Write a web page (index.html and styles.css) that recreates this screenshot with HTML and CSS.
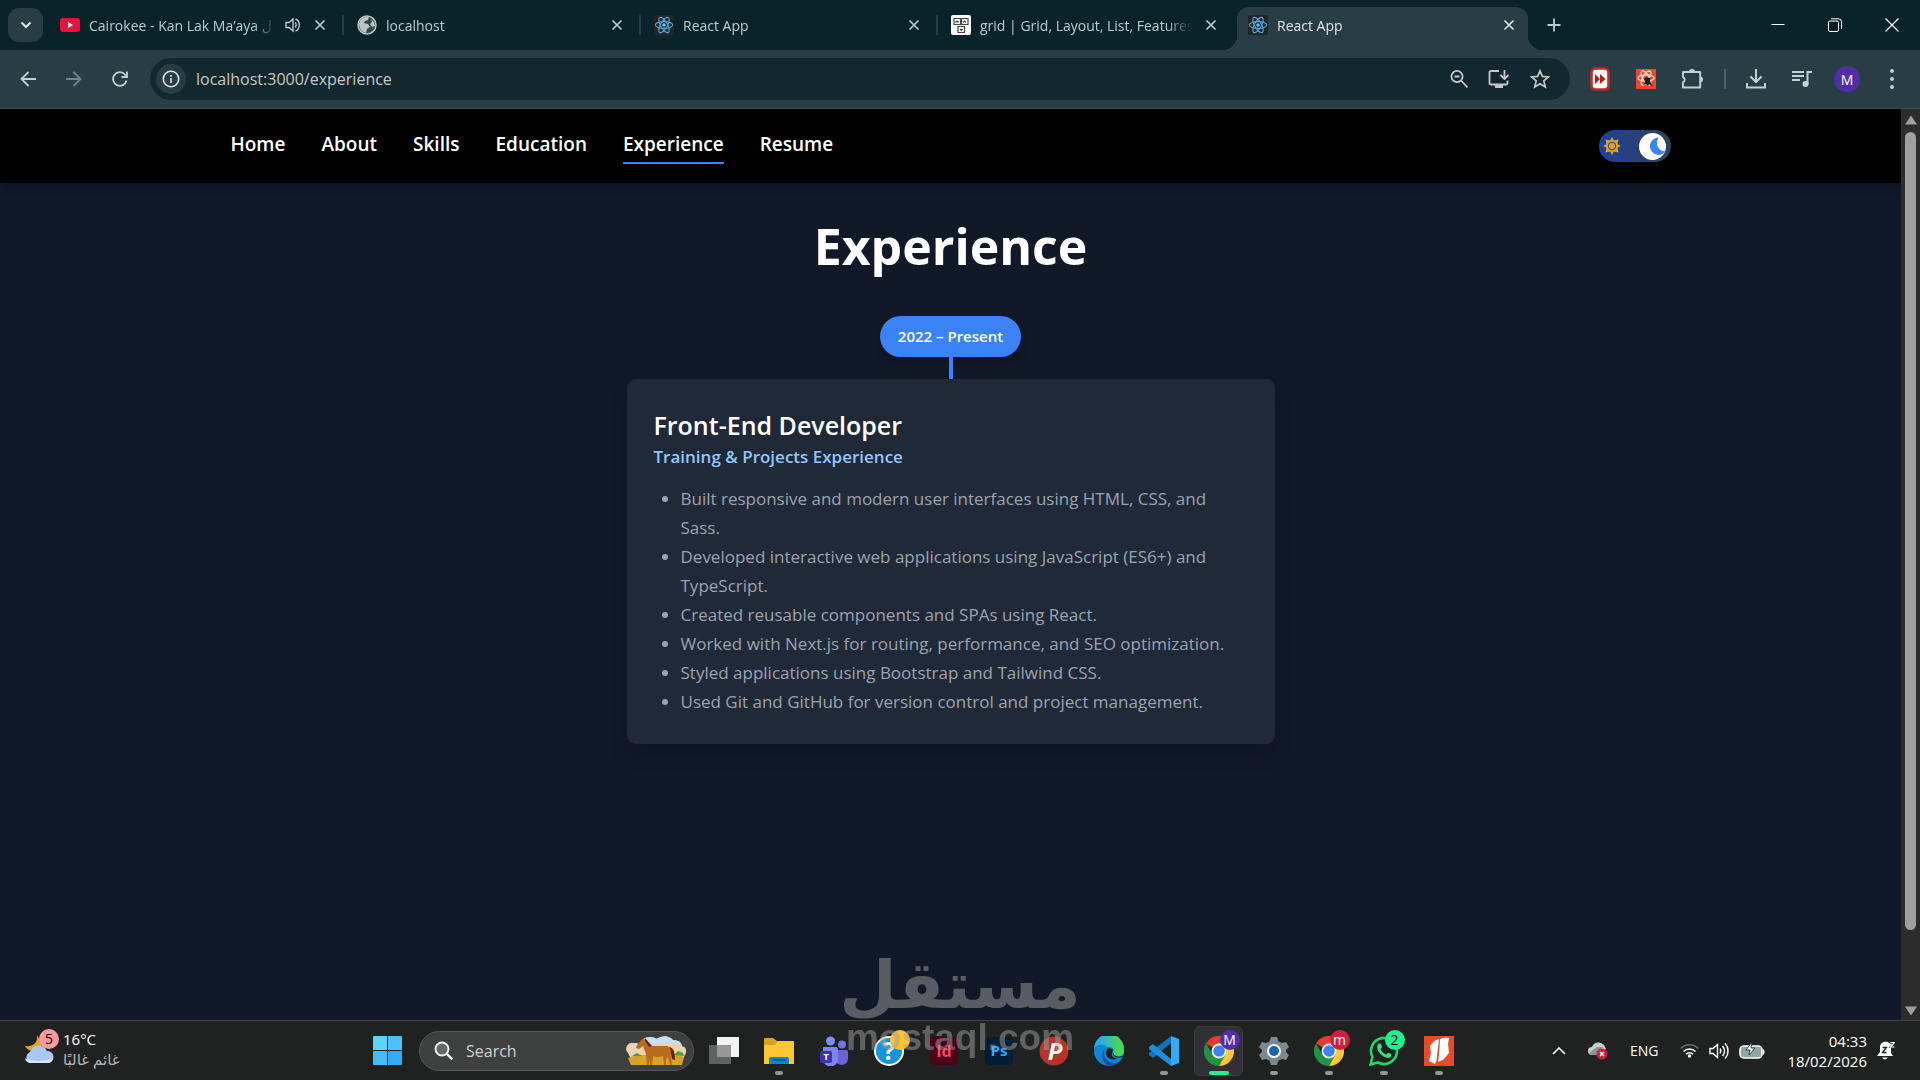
FILE: index.html
```
<!DOCTYPE html>
<html lang="en">
<head>
  <meta charset="UTF-8">
  <meta name="viewport" content="width=device-width, initial-scale=1.0">
  <title>React App</title>
  <link rel="stylesheet" href="styles.css">
</head>
<body>
  <!-- shared icons -->
  <svg class="sprite" aria-hidden="true">
    <symbol id="react" viewBox="0 0 20 20">
      <rect width="20" height="20" rx="2" fill="#242424"/>
      <g fill="none" stroke="#4fa8dc" stroke-width="1.1">
        <ellipse cx="10" cy="10" rx="8.6" ry="3.4"/>
        <ellipse cx="10" cy="10" rx="8.6" ry="3.4" transform="rotate(60 10 10)"/>
        <ellipse cx="10" cy="10" rx="8.6" ry="3.4" transform="rotate(120 10 10)"/>
      </g>
      <circle cx="10" cy="10" r="1.7" fill="#61c8f5"/>
    </symbol>
    <symbol id="close" viewBox="0 0 12 12">
      <path d="M1.5 1.5l9 9M10.5 1.5l-9 9" fill="none" stroke="currentColor" stroke-width="1.7"/>
    </symbol>
    <symbol id="chrome" viewBox="0 0 30 30">
      <path d="M15 15L2 7.5A15 15 0 0 1 28 7.5z" fill="#e33b2e"/>
      <path d="M2 7.5A15 15 0 0 0 15 30L21.5 18.5L9 19z" fill="#229342"/>
      <path d="M21.5 18.5L15 30A15 15 0 0 0 28 7.5H15z" fill="#fcc934"/>
      <circle cx="15" cy="15" r="7.4" fill="#fff"/>
      <circle cx="15" cy="15" r="5.8" fill="#3f82ee"/>
    </symbol>
  </svg>

  <div class="browser">
    <div class="tabs">
      <button class="tab-search" aria-label="Search tabs">
        <svg width="12" height="8" viewBox="0 0 12 8"><path d="M1.5 1.5L6 6l4.5-4.5" fill="none" stroke="currentColor" stroke-width="2"/></svg>
      </button>
      <div class="tab">
        <svg class="favicon" viewBox="0 0 20 20"><rect y="3" width="20" height="14" rx="3" fill="#e8113c"/><path d="M8 7l5 3-5 3z" fill="#fff"/></svg>
        <span class="tab-title">Cairokee - Kan Lak Ma’aya ل</span>
        <svg width="16" height="16" viewBox="0 0 16 16" fill="none" stroke="currentColor" stroke-width="1.4"><path d="M1 5.5h3L8 2v12L4 10.5H1zM10 5.5c1.500 1 1.500 4 0 5M10.500 2c5 1.500 5 10.500 0 12"/></svg>
        <button class="tab-close" aria-label="Close tab"><svg><use href="#close"/></svg></button>
      </div>
      <div class="tab">
        <svg class="favicon" viewBox="0 0 20 20"><circle cx="10" cy="10" r="9" fill="#33444a" stroke="#bdc1c6" stroke-width="1.5"/><path d="M2 8c2-5 6-7 10-6l-1 3-3 1-1 2 4 1 2 3-3 2-1 4c-4-1-7-4-7-10zM14 4l3 3 1 4-3 1-2-3 2-2z" fill="#bdc1c6"/></svg>
        <span class="tab-title">localhost</span>
        <button class="tab-close" aria-label="Close tab"><svg><use href="#close"/></svg></button>
      </div>
      <div class="tab">
        <svg class="favicon"><use href="#react"/></svg>
        <span class="tab-title">React App</span>
        <button class="tab-close" aria-label="Close tab"><svg><use href="#close"/></svg></button>
      </div>
      <div class="tab no-line">
        <svg class="favicon" viewBox="0 0 20 20"><rect width="20" height="20" rx="2" fill="#fff"/><g fill="none" stroke="#444" stroke-width="1.2"><path d="M3 3.500h6.500v6H3zM10.500 3.500H17v6h-6.500zM7 11.500h6.500v6H7zM4.500 7.500l1.500-1.500 1.500 1.500M12 7.500l1.500-1.500 1.500 1.500M9 14l1.300 1.300L11.600 14"/></g></svg>
        <span class="tab-title">grid | Grid, Layout, List, Features</span>
        <button class="tab-close" aria-label="Close tab"><svg><use href="#close"/></svg></button>
      </div>
      <div class="tab active">
        <svg class="favicon"><use href="#react"/></svg>
        <span class="tab-title">React App</span>
        <button class="tab-close" aria-label="Close tab"><svg><use href="#close"/></svg></button>
      </div>
      <button class="new-tab" aria-label="New tab">
        <svg width="14" height="14" viewBox="0 0 14 14"><path d="M7 0.500v13M0.500 7h13" stroke="currentColor" stroke-width="1.8"/></svg>
      </button>
      <div class="window-controls">
        <button aria-label="Minimize"><svg width="14" height="14" viewBox="0 0 14 14"><path d="M0.500 6.500h13" stroke="#fff"/></svg></button>
        <button aria-label="Restore"><svg width="14" height="14" viewBox="0 0 14 14" fill="none" stroke="#fff"><rect x="0.500" y="3" width="10" height="10.500" rx="1.500"/><path d="M3 0.800h7.500a3 3 0 0 1 3 3V11"/></svg></button>
        <button aria-label="Close"><svg width="14" height="14" viewBox="0 0 14 14"><path d="M0.500 0.500l13 13M13.500 0.500l-13 13" stroke="#fff" stroke-width="1.2"/></svg></button>
      </div>
    </div>

    <div class="toolbar">
      <button class="tool" aria-label="Back"><svg width="16" height="16" viewBox="0 0 16 16"><path d="M8.500 1L1.500 8l7 7M1.500 8H16" fill="none" stroke="currentColor" stroke-width="1.8"/></svg></button>
      <button class="tool" aria-label="Forward" disabled><svg width="16" height="16" viewBox="0 0 16 16"><path d="M7.500 1l7 7-7 7M14.500 8H0" fill="none" stroke="currentColor" stroke-width="1.8"/></svg></button>
      <button class="tool" aria-label="Reload"><svg width="16" height="16" viewBox="0 0 16 16"><path d="M14.500 9.500A6.800 6.800 0 1 1 13 3.500l1.500 1.500M15 0.500V6H9.500" fill="none" stroke="currentColor" stroke-width="1.8"/></svg></button>
      <div class="address">
        <button class="site-info" aria-label="Site information"><svg width="18" height="18" viewBox="0 0 18 18"><circle cx="9" cy="9" r="7.7" fill="none" stroke="#e3e3e3" stroke-width="1.6"/><path d="M9 8v5M9 5v1.700" stroke="#e3e3e3" stroke-width="1.6"/></svg></button>
        <input class="url" type="text" aria-label="Address" value="localhost:3000/experience">
        <button class="tool-small" aria-label="Zoom"><svg width="18" height="20" viewBox="0 0 18 20"><g fill="none" stroke="currentColor" stroke-width="1.8"><circle cx="7" cy="7.5" r="5.6"/><path d="M11 11.500l6.500 7M4.500 7.500h5"/></g></svg></button>
        <button class="tool-small" aria-label="Install app"><svg width="22" height="20" viewBox="0 0 22 20"><g fill="none" stroke="currentColor" stroke-width="1.8"><path d="M11 2H3a1.500 1.500 0 0 0-1.500 1.500V14A1.500 1.500 0 0 0 3 15.500h15a1.500 1.500 0 0 0 1.500-1.500v-2.500M16.500 1v8.500M12.500 6l4 4 4-4"/></g><path d="M7 15h8v4H7z" fill="currentColor"/></svg></button>
        <button class="tool-small" aria-label="Bookmark"><svg width="20" height="20" viewBox="0 0 20 20"><path d="M10 1.800l2.400 5.600 6 .500-4.600 4 1.400 6L10 14.700l-5.200 3.200 1.400-6-4.600-4 6-.500z" fill="none" stroke="currentColor" stroke-width="1.7"/></svg></button>
      </div>
      <div class="extensions">
        <button class="tool" aria-label="Skip"><svg width="20" height="24" viewBox="0 0 20 24"><rect x="1.500" y="1.500" width="17" height="21" rx="4" fill="#fff" stroke="#c62828" stroke-width="2.6"/><path d="M5 7l5 5-5 5zM10 7l5.500 5-5.500 5z" fill="#b71c1c"/></svg></button>
        <button class="tool" aria-label="React tools"><svg width="20" height="20" viewBox="0 0 20 20"><rect width="20" height="20" fill="#f4442e"/><g fill="none" stroke="#ffe3dc" stroke-width="1.3"><ellipse cx="10" cy="9" rx="8" ry="3.2"/><ellipse cx="10" cy="9" rx="8" ry="3.2" transform="rotate(60 10 9)"/><ellipse cx="10" cy="9" rx="8" ry="3.2" transform="rotate(120 10 9)"/></g><path d="M10 8l3 1 2-1-1 4 3 6-4-3-1 2-2-2-3 1 2-3-1-3z" fill="#1c1c1c"/></svg></button>
        <button class="tool" aria-label="Extensions"><svg width="22" height="22" viewBox="0 0 22 22"><path d="M2 4h17.200v15.500H2v-5.300a2.700 2.700 0 0 0 0-5z" fill="none" stroke="currentColor" stroke-width="1.9" stroke-linejoin="round"/><path d="M8 4a3 3 0 0 1 6 0zM19 8.500a3 3 0 0 1 0 6z" fill="currentColor"/></svg></button>
      </div>
      <span class="divider"></span>
      <div class="extensions">
        <button class="tool" aria-label="Downloads"><svg width="20" height="22" viewBox="0 0 20 22"><path d="M10 1v12M4.500 8.500L10 14l5.500-5.500M1 15v4.500h18V15" fill="none" stroke="currentColor" stroke-width="2"/></svg></button>
        <button class="tool" aria-label="Media"><svg width="20" height="18" viewBox="0 0 20 18"><path d="M0 2h12M0 6h12M0 10h8M15.500 14V2H20" fill="none" stroke="currentColor" stroke-width="2"/><circle cx="13.500" cy="14" r="3" fill="currentColor"/></svg></button>
        <button class="profile" aria-label="Profile">M</button>
        <button class="tool" aria-label="Menu"><svg width="4" height="20" viewBox="0 0 4 20" fill="currentColor"><circle cx="2" cy="2" r="2"/><circle cx="2" cy="10" r="2"/><circle cx="2" cy="18" r="2"/></svg></button>
      </div>
    </div>

    <div class="viewport">
      <div class="page">
        <header class="navbar">
          <div class="navbar-inner">
            <nav>
              <a href="#home">Home</a>
              <a href="#about">About</a>
              <a href="#skills">Skills</a>
              <a href="#education">Education</a>
              <a href="#experience" class="current">Experience</a>
              <a href="#resume">Resume</a>
            </nav>
            <label class="theme-toggle">
              <input type="checkbox" aria-label="Dark mode" checked>
              <svg width="18" height="18" viewBox="0 0 18 18"><path d="M9 0l1.800 3.500L15.400 2.600l-.900 4.600L18 9l-3.500 1.800.900 4.600-4.600-.900L9 18l-1.800-3.500-4.600.900.900-4.600L0 9l3.500-1.800-.900-4.600 4.600.900z" fill="#e0a526"/><circle cx="9" cy="9" r="3.800" fill="none" stroke="#2a3f7a"/></svg>
              <span class="knob"><svg width="16" height="18" viewBox="0 0 16 18"><path d="M9 0.500A8.700 8.700 0 1 0 15.500 14.500A8.500 8.500 0 0 1 9 0.500z" fill="#3b82f6"/></svg></span>
            </label>
          </div>
        </header>

        <main>
          <h1>Experience</h1>
          <div class="period">2022 – Present</div>
          <div class="line"></div>
          <article class="card">
            <h2>Front-End Developer</h2>
            <h3>Training &amp; Projects Experience</h3>
            <ul>
              <li>Built responsive and modern user interfaces using HTML, CSS, and Sass.</li>
              <li>Developed interactive web applications using JavaScript (ES6+) and TypeScript.</li>
              <li>Created reusable components and SPAs using React.</li>
              <li>Worked with Next.js for routing, performance, and SEO optimization.</li>
              <li>Styled applications using Bootstrap and Tailwind CSS.</li>
              <li>Used Git and GitHub for version control and project management.</li>
            </ul>
          </article>
        </main>
      </div>
      <div class="scrollbar">
        <svg width="12" height="10" viewBox="0 0 12 10"><path d="M6 0.500L12 9.500H0z" fill="#9f9f9f"/></svg>
        <div class="track"><div class="thumb"></div></div>
        <svg width="12" height="10" viewBox="0 0 12 10"><path d="M6 9.500L12 0.500H0z" fill="#9f9f9f"/></svg>
      </div>
    </div>
  </div>

  <footer class="taskbar">
    <button class="weather">
      <span class="icon">
        <svg width="32" height="32" viewBox="0 0 32 32"><path d="M14 2c1 7-3 12-12 11 3 7 14 6 17-2z" fill="#e8a317"/><path d="M7 30a6 6 0 0 1 0-11 9 9 0 0 1 17-1 6 6 0 0 1 1 12z" fill="#a9c8f5"/><path d="M2 25a6 6 0 0 0 5 5h18a6 6 0 0 0 5-5c-5 4-23 4-28 0z" fill="#d8e6fb"/></svg>
        <span class="badge pink">5</span>
      </span>
      <span class="weather-text">
        <span>16°C</span>
        <span class="muted" lang="ar" dir="rtl">غائم غالبًا</span>
      </span>
    </button>

    <div class="apps">
      <button class="app" aria-label="Start"><svg width="29" height="29" viewBox="0 0 29 29"><path d="M0 1a1 1 0 0 1 1-1h13v14H0z" fill="#5fd3ff"/><path d="M15 0h13a1 1 0 0 1 1 1v13H15z" fill="#4cc2f8"/><path d="M0 15h14v14H1a1 1 0 0 1-1-1z" fill="#43bdf8"/><path d="M15 15h14v13a1 1 0 0 1-1 1H15z" fill="#2fadf2"/></svg></button>
      <label class="search">
        <svg width="20" height="20" viewBox="0 0 20 20"><circle cx="8" cy="8" r="6.5" fill="#66686a" stroke="#f0f0f0" stroke-width="2"/><path d="M12.800 12.800l5.500 5.500" stroke="#f0f0f0" stroke-width="2.4"/></svg>
        <input type="search" placeholder="Search" aria-label="Search">
        <svg width="62" height="32" viewBox="0 0 62 32">
          <path d="M3 18a6 6 0 0 1 6-10q4 0 6 2 2-8 10-8 5 0 6 2 10-6 17 1 8 0 9 6 5 1 4 7l-3 6H6z" fill="#e9d3b0"/>
          <path d="M9 8q4 0 6 2 2-8 10-8 5 0 6 2 10-6 17 1 8 0 9 6-10-5-20-3T9 11z" fill="#c6dff2"/>
          <path d="M3 23l8-3h42l6 2-2 8H6z" fill="#d5a52b"/>
          <path d="M7 21l5-3 5 3zM49 20l4-4 5 2 1 3z" fill="#4f9a44"/>
          <path d="M12 10l5-6 2-1 1 2 5 6h17q5 1 5 6l-1 5 1 8h-2l-2-8-2 2v6h-2l-1-9q-5 2-10 0l-1 9h-2v-8l-1 8h-2l-1-11-3-8-4 3-3-1z" fill="#b96a1d"/>
          <path d="M20 3l7 8-3 1-4-6zM45 12q5 1 5 13l-3-1z" fill="#5a2a14"/>
        </svg>
      </label>
      <button class="app" aria-label="Task view"><svg width="30" height="30" viewBox="0 0 30 30"><path d="M8 1h22v20H8z" fill="#f2f2f2"/><path d="M0 9h22v19H0z" fill="#77797a" opacity="0.75"/></svg></button>
      <button class="app running" aria-label="File Explorer"><svg width="30" height="30" viewBox="0 0 30 30"><path d="M0 3a1 1 0 0 1 1-1h8l4 3h11v6H0z" fill="#dfa021"/><path d="M0 9h11l3-4h16v23H0z" fill="#fcc737"/><path d="M5 28v-5a2 2 0 0 1 2-2h16a2 2 0 0 1 2 2v5z" fill="#1681d0"/><path d="M9 24h12" stroke="#0a4f8c" stroke-width="1.5"/></svg></button>
      <button class="app" aria-label="Teams"><svg width="30" height="30" viewBox="0 0 30 30"><circle cx="11.500" cy="5" r="4.500" fill="#7d8ff2"/><circle cx="23" cy="8.500" r="4" fill="#6a74e6"/><path d="M16 14h11a2 2 0 0 1 2 2v7a6.500 6.500 0 0 1-12 3z" fill="#6a62dc"/><path d="M4 11h13a2 2 0 0 1 2 2v10a7 7 0 0 1-15 0z" fill="#7c86f0"/><rect x="1" y="15" width="12" height="12" rx="2" fill="#3a33b5"/><text x="7" y="24" class="glyph" font-size="9" fill="#fff">T</text></svg></button>
      <button class="app" aria-label="Get Help"><svg width="42" height="42" viewBox="0 0 42 42"><circle cx="21" cy="21" r="14" fill="#1394dc" stroke="#fff" stroke-width="2"/><text x="21" y="30" class="glyph" font-size="25" fill="#fff">?</text><circle cx="32" cy="10" r="10" fill="#fcc42c"/></svg></button>
      <button class="app" aria-label="InDesign"><svg width="28" height="28" viewBox="0 0 28 28"><rect width="28" height="28" rx="5" fill="#4a0218"/><text x="14" y="20" class="glyph" font-size="16" fill="#ff4468">Id</text></svg></button>
      <button class="app" aria-label="Photoshop"><svg width="28" height="28" viewBox="0 0 28 28"><rect width="28" height="28" rx="5" fill="#021e36"/><text x="14" y="19" class="glyph" font-size="15" fill="#31a8ff">Ps</text></svg></button>
      <button class="app" aria-label="Psiphon"><svg width="30" height="30" viewBox="0 0 30 30"><circle cx="15" cy="15" r="14.500" fill="#b5342a"/><text x="16" y="24" class="glyph slanted" font-size="24" fill="#fff">P</text></svg></button>
      <button class="app" aria-label="Edge"><svg width="30" height="30" viewBox="0 0 30 30">
        <defs><linearGradient id="edge" x1="0" x2="1"><stop offset="0.2" stop-color="#2aa7ee"/><stop offset="0.8" stop-color="#45d860"/></linearGradient></defs>
        <circle cx="15" cy="15" r="15" fill="#0f86d4"/>
        <path d="M0 13A15 15 0 0 1 30 13c1 5-3 8-7 8-5 0-5-3-4-5 1-4-3-6-6-5C8 6 2 9 0 13z" fill="url(#edge)"/>
        <path d="M13 11c-6 4-3 16 8 16 3 0 5-2 7-4a15 15 0 0 1-12 7C8 29 5 16 13 11z" fill="#1a4fa0"/>
        <path d="M18 12c3 2 0 5 1 7 3 4 8 2 10 2q1 1 0 3l3 0-1-5q-6 3-11 0z" fill="#202221"/>
        <path d="M13 13c4-2 7 1 5 4-1 3 2 6 6 5-5 3-12 1-12-5z" fill="#202221"/></svg></button>
      <button class="app running" aria-label="VS Code"><svg width="30" height="30" viewBox="0 0 30 30"><path d="M22 0v7L4 22l-4-3v-2z" fill="#1272bd"/><path d="M22 30v-7L4 8l-4 3v2z" fill="#1d8fdc"/><path d="M22 0l8 3v24l-8 3z" fill="#35aaf5"/></svg></button>
      <button class="app running focused" aria-label="Chrome">
        <span class="icon"><svg width="30" height="30"><use href="#chrome"/></svg><span class="badge purple">M</span></span>
      </button>
      <button class="app running" aria-label="Settings"><svg width="30" height="30" viewBox="0 0 30 30"><path d="M12 1l6 0 1.500 4.500L23 7l4-1 3 5-3 3v2l3 3-3 5-4-1-3.500 1.500L18 29h-6l-1.500-4.500L7 23l-4 1-3-5 3-3v-2L0 11l3-5 4 1 3.500-1.500z" fill="#7b8a92"/><circle cx="15" cy="15" r="7" fill="#f2f6f8"/><circle cx="15" cy="15" r="5" fill="#1b63a8"/></svg></button>
      <button class="app running" aria-label="Chrome">
        <span class="icon"><svg width="30" height="30"><use href="#chrome"/></svg><span class="badge red">m</span></span>
      </button>
      <button class="app running" aria-label="WhatsApp">
        <span class="icon"><svg width="30" height="30" viewBox="0 0 30 30"><path d="M1.500 28.500l2-7.500A13 13 0 1 1 9 26.500z" fill="none" stroke="#25d366" stroke-width="2.6"/><path d="M8.500 9c2-3 4-1 4.500 2l-1.500 2c1 3 3 4 5.500 5.500l2-1.500c3 0 4.500 2 2 4.500C16 24 6 15 8.500 9z" fill="#3bdc78"/></svg><span class="badge green">2</span></span>
      </button>
      <button class="app running" aria-label="Nitro"><svg width="30" height="30" viewBox="0 0 30 30"><rect width="30" height="30" fill="#ea4a28"/><path d="M6 10q4-6 9-7l-1 8-1 9q0 5-2 8l-6-3 2-8z" fill="#fff"/><path d="M16 3q4-2 9-1l-1 6 1 9-6 7-5 2 1-7z" fill="#fff"/></svg></button>
    </div>

    <div class="tray">
      <button aria-label="Show hidden icons"><svg width="14" height="8" viewBox="0 0 14 8"><path d="M1 7l6-6 6 6" fill="none" stroke="#fff" stroke-width="1.6"/></svg></button>
      <button aria-label="OneDrive"><svg width="20" height="18" viewBox="0 0 20 18"><path d="M4 13a4 4 0 0 1 0-8 7 7 0 0 1 12-2l2 4-8 6z" fill="#c9cbcc"/><path d="M1 11L9 5l6 0-6 8H4z" fill="#8f9294"/><circle cx="14" cy="12" r="5.500" fill="#c8203c"/><path d="M12 10l4 4M16 10l-4 4" stroke="#fff" stroke-width="1.3"/></svg></button>
      <button class="lang">ENG</button>
      <button class="status" aria-label="Quick settings">
        <svg width="19" height="15" viewBox="0 0 19 15" fill="none" stroke-width="1.6"><path d="M0.800 5.500a12 12 0 0 1 17.400 0" stroke="#6d6f6e"/><path d="M3.500 8.500a8.500 8.500 0 0 1 12 0M6 11.300a5 5 0 0 1 7 0" stroke="#fff"/><circle cx="9.500" cy="13" r="1.700" fill="#fff"/></svg>
        <svg width="20" height="18" viewBox="0 0 20 18" fill="none" stroke="#fff" stroke-width="1.4"><path d="M1 6.500h3l4.500-4v13l-4.500-4H1zM11 6.500c1 1.500 1 3.500 0 5M13.500 4c2.500 3 2.500 7 0 10M16 1.500c4 4 4 11 0 15"/></svg>
        <svg width="26" height="18" viewBox="0 0 26 18"><rect x="1" y="4" width="22" height="12" rx="4" fill="#8fa6a4" stroke="#fff" stroke-width="1.6"/><path d="M24 7c2 1 2 5 0 6z" fill="#fff"/><path d="M13 0L7 8h4l-1 5 6-7h-4z" fill="#fff" stroke="#202221" stroke-width="0.8"/></svg>
      </button>
      <button class="clock"><span>04:33</span><span>18/02/2026</span></button>
      <button aria-label="Notifications"><svg width="18" height="20" viewBox="0 0 18 20"><path d="M3 6c0-6 8-6 9-4h4l-2 3v7l2 3H0l3-4zM5 16.500h6q-3 4-6 0z" fill="#fff"/><path d="M5.500 6.500h4l-4 5h4M13 2h4l-4 4h4" fill="none" stroke="#202221" stroke-width="1.3"/><path d="M13.500 1.500h4l-4 4.500h4" fill="none" stroke="#fff" stroke-width="1.2"/></svg></button>
    </div>
  </footer>

  <div class="watermark">
    <span class="watermark-name" lang="ar">مستقل</span>
    <span class="watermark-url">mostaql.com</span>
  </div>
</body>
</html>
```
FILE: styles.css
```
* {
  margin: 0;
  padding: 0;
  box-sizing: border-box;
}

body {
  display: flex;
  flex-direction: column;
  position: relative;
  height: 100vh;
  overflow: hidden;
  font-family: "Open Sans", "Noto Sans", "DejaVu Sans", sans-serif;
  background-color: #111827;
  color: white;
}

button, input {
  font: inherit;
  color: inherit;
  background: none;
  border: none;
  outline: none;
}

svg {
  display: block;
  flex-shrink: 0;
}

.sprite {
  display: none;
}

/* browser */

.browser {
  display: flex;
  flex-direction: column;
  flex: 1;
  min-height: 0;
}

.tabs {
  display: flex;
  align-items: center;
  height: 50px;
  padding-left: 8px;
  background-color: #0a2328;
  color: #b5cfd1;
  font-size: 14px;
}

.tab-search {
  display: flex;
  align-items: center;
  justify-content: center;
  width: 35px;
  height: 34px;
  margin-right: 4px;
  border-radius: 11px;
  background-color: #293e44;
  color: #e3e3e3;
}

.tab {
  display: flex;
  align-items: center;
  gap: 9px;
  position: relative;
  flex: 0 1 297px;
  min-width: 0;
  height: 43px;
  padding: 0 14px 0 13px;
}

.tab::after {
  content: "";
  position: absolute;
  right: 0;
  width: 2px;
  height: 20px;
  background-color: #293e44;
}

.tab.no-line::after {
  display: none;
}

.favicon {
  width: 20px;
  height: 20px;
}

.tab-title {
  flex: 1;
  overflow: hidden;
  white-space: nowrap;
  -webkit-mask-image: linear-gradient(to right, black 88%, transparent);
  mask-image: linear-gradient(to right, black 88%, transparent);
}

.tab-close {
  padding: 4px;
}

.tab-close svg {
  width: 12px;
  height: 12px;
}

.tab.active {
  flex-basis: 291px;
  align-self: flex-end;
  margin-left: 2px;
  padding: 0 9px 7px 11px;
  border-radius: 12px 12px 0 0;
  background-color: #293e44;
  color: #e3e3e3;
}

.tab.active::before, .tab.active::after {
  content: "";
  position: absolute;
  bottom: 0;
  width: 14px;
  height: 14px;
}

.tab.active::before {
  left: -14px;
  background: radial-gradient(circle at 0 0, transparent 14px, #293e44 14px);
}

.tab.active::after {
  right: -14px;
  background: radial-gradient(circle at 100% 0, transparent 14px, #293e44 14px);
}

.new-tab {
  padding: 8px;
  margin-left: 11px;
}

.window-controls {
  display: flex;
  gap: 1px;
  margin-left: auto;
}

.window-controls button {
  padding: 18px 21px;
}

.toolbar {
  display: flex;
  align-items: center;
  gap: 14px;
  height: 59px;
  padding: 0 12px;
  background-color: #293e44;
  border-bottom: 1px solid #3d4f50;
  color: #bdd3d5;
}

.tool {
  display: flex;
  align-items: center;
  justify-content: center;
  width: 32px;
  height: 32px;
}

.tool:disabled {
  color: #71858a;
}

.address {
  display: flex;
  align-items: center;
  gap: 20px;
  flex: 1;
  height: 42px;
  padding: 0 20px 0 6px;
  border-radius: 21px;
  background-color: #13282e;
  color: #c7c7c7;
}

.site-info {
  padding: 6px;
  border-radius: 50%;
  background-color: #293e44;
}

.url {
  flex: 1;
  margin-left: -10px;
  font-size: 16px;
}

.extensions {
  display: flex;
  align-items: center;
  gap: 14px;
}

.divider {
  width: 2px;
  height: 20px;
  margin-left: 2px;
  background-color: #48616a;
}

.profile {
  width: 26px;
  height: 26px;
  margin: 0 2px;
  border-radius: 50%;
  background-color: #512da8;
  color: white;
  font-size: 14px;
}

.viewport {
  display: flex;
  flex: 1;
  min-height: 0;
}

.scrollbar {
  display: flex;
  flex-direction: column;
  align-items: center;
  gap: 7px;
  width: 19px;
  padding: 6px 0 4px;
  background-color: #2c2c2c;
}

.track {
  flex: 1;
  width: 11px;
}

.thumb {
  height: 92%;
  border-radius: 6px;
  background-color: #9f9f9f;
}

/* portfolio page */

.page {
  flex: 1;
  overflow: hidden;
}

.navbar {
  background-color: black;
  box-shadow: 0 4px 10px rgba(0, 0, 0, 0.2);
}

.navbar-inner {
  display: flex;
  align-items: center;
  justify-content: space-between;
  max-width: 1440px;
  height: 74px;
  margin: 0 auto;
}

nav {
  display: flex;
  gap: 36px;
  padding-top: 2px;
  font-size: 19px;
  font-weight: 600;
}

nav a {
  padding-bottom: 5px;
  border-bottom: 2px solid transparent;
  color: white;
  text-decoration: none;
}

nav a.current {
  border-color: #3b82f6;
}

.theme-toggle {
  display: flex;
  align-items: center;
  justify-content: space-between;
  width: 72px;
  height: 32px;
  padding: 0 5px 0 4px;
  border-radius: 16px;
  background: linear-gradient(to right, #1e40a0, #334155);
  cursor: pointer;
}

.theme-toggle input {
  position: absolute;
  opacity: 0;
}

.knob {
  display: flex;
  align-items: center;
  justify-content: flex-end;
  width: 27px;
  height: 27px;
  border-radius: 50%;
  background-color: white;
}

main {
  display: flex;
  flex-direction: column;
  align-items: center;
  padding: 36px 24px;
}

h1 {
  margin-bottom: 43px;
  font-size: 50px;
  line-height: 54px;
}

.period {
  padding: 8px 18px;
  border-radius: 21px;
  background-color: #3b82f6;
  box-shadow: 0 6px 10px rgba(0, 0, 0, 0.2);
  font-size: 15px;
  font-weight: 600;
  line-height: 25px;
}

.line {
  width: 4px;
  height: 22px;
  background-color: #3b82f6;
}

.card {
  width: 100%;
  max-width: 648px;
  padding: 28px 27px;
  border-radius: 9px;
  background-color: #1f2937;
  box-shadow: 0 12px 18px rgba(0, 0, 0, 0.15);
}

h2 {
  font-size: 25px;
  font-weight: 600;
  line-height: 36px;
}

h3 {
  color: #93c5fd;
  font-size: 17px;
  font-weight: 600;
  line-height: 27px;
}

.card ul {
  margin-top: 14px;
  padding-left: 27px;
  color: #9ca3af;
  font-size: 17px;
  line-height: 29px;
}

/* taskbar */

.taskbar {
  display: flex;
  align-items: center;
  height: 60px;
  border-top: 1px solid #444545;
  background-color: #202221;
  font-size: 15px;
}

.weather {
  display: flex;
  align-items: center;
  gap: 8px;
  width: 360px;
  padding: 0 0 3px 23px;
}

.weather-text {
  display: flex;
  flex-direction: column;
  align-items: flex-start;
  line-height: 20px;
}

.muted {
  color: #b4b6b5;
  font-size: 15px;
}

.icon {
  position: relative;
}

.badge {
  position: absolute;
  top: -6px;
  right: -6px;
  width: 20px;
  height: 20px;
  border-radius: 50%;
  font-size: 14px;
  line-height: 20px;
  text-align: center;
}

.pink {
  background-color: #f99a9e;
  color: black;
}

.purple {
  background-color: #512da8;
}

.red {
  background-color: #d0203f;
}

.green {
  background-color: #21f28c;
  color: black;
}

.weather .badge {
  top: -4px;
  right: -4px;
}

.apps {
  display: flex;
  align-items: center;
}

.app {
  display: flex;
  align-items: center;
  justify-content: center;
  position: relative;
  width: 55px;
  height: 50px;
}

.app.running::after {
  content: "";
  position: absolute;
  bottom: 1px;
  width: 8px;
  height: 4px;
  border-radius: 2px;
  background-color: #949696;
}

.app.focused::before {
  content: "";
  position: absolute;
  inset: 0 3px;
  border: 1px solid #3c3b40;
  border-radius: 6px;
  background-color: #313135;
}

.app.focused::after {
  width: 20px;
  background-color: #21f28c;
}

.search {
  display: flex;
  align-items: center;
  gap: 12px;
  width: 275px;
  height: 40px;
  margin: 0 2px 0 4px;
  padding: 0 6px 0 14px;
  border: 1px solid #565857;
  border-radius: 20px;
  background-color: #3e403f;
  font-size: 16px;
}

.search input {
  flex: 1;
  min-width: 0;
}

.search input::placeholder {
  color: #d0d0d0;
}

.glyph {
  font-family: "Open Sans", sans-serif;
  font-weight: 700;
  text-anchor: middle;
}

.slanted {
  font-style: italic;
}

.tray {
  display: flex;
  align-items: center;
  gap: 22px;
  margin-left: auto;
  padding-right: 25px;
}

.lang {
  font-size: 14px;
}

.status {
  display: flex;
  align-items: center;
  gap: 10px;
}

.clock {
  display: flex;
  flex-direction: column;
  align-items: flex-end;
  margin-right: -12px;
  line-height: 20px;
}

/* watermark lies over both the page and the taskbar */

.watermark {
  display: flex;
  flex-direction: column;
  align-items: center;
  position: absolute;
  right: 0;
  bottom: 22px;
  left: 0;
  color: #a0a0a0;
  opacity: 0.5;
  font-weight: 700;
  pointer-events: none;
}

.watermark-name {
  font-family: "DejaVu Sans", sans-serif;
  font-size: 66px;
  line-height: 64px;
}

.watermark-url {
  font-family: "Liberation Sans", sans-serif;
  font-size: 37px;
  line-height: 40px;
}
```
